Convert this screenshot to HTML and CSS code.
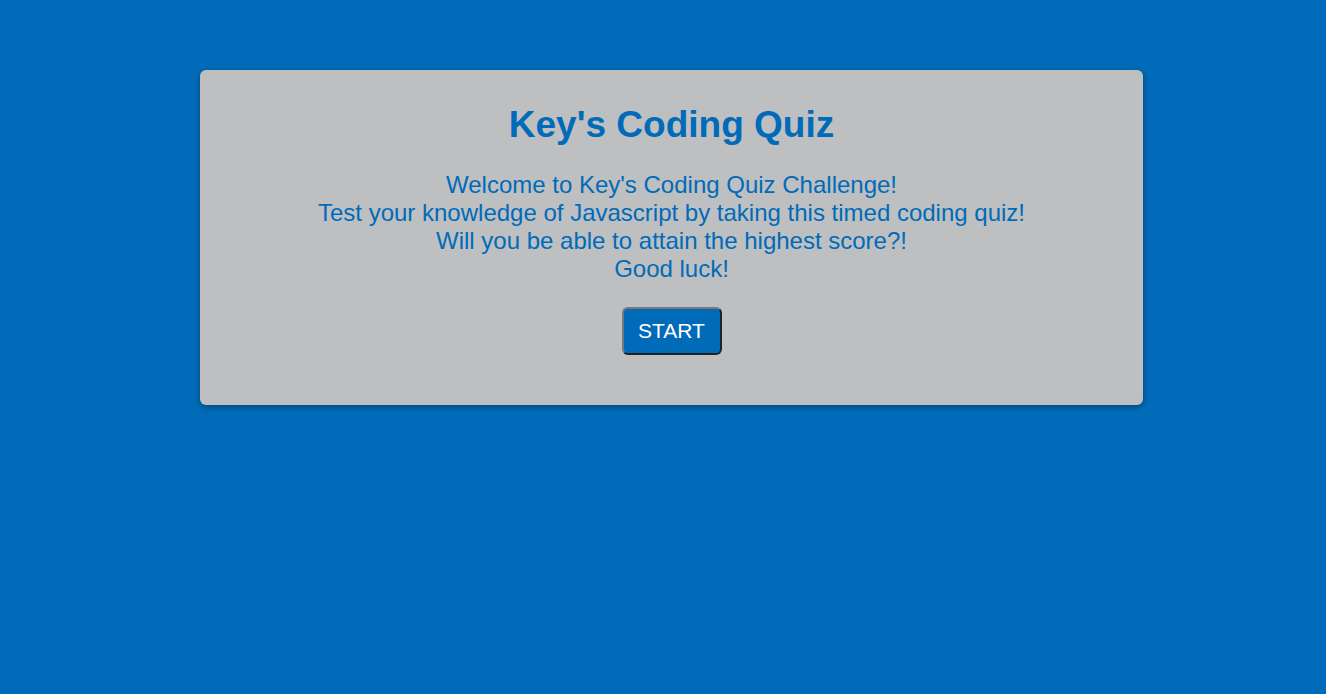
FILE: index.html
```html
<!DOCTYPE html>
<html>
<head>
<meta charset="utf-8">
<link rel="stylesheet" href="styles.css">
</head>
<body>
<main class="card">
  <h1 class="title">Key's Coding Quiz</h1>
  <p class="intro">Welcome to Key's Coding Quiz Challenge!<br>Test your knowledge of Javascript by taking this timed coding quiz!<br>Will you be able to attain the highest score?!<br>Good luck!</p>
  <button class="start">START</button>
</main>
</body>
</html>
```
FILE: styles.css
```css
html, body {
  margin: 0;
  padding: 0;
}
body {
  background: #006bb8;
  font-family: "Liberation Sans", Arial, sans-serif;
  min-height: 694px;
  padding-top: 70px;
  box-sizing: border-box;
}
.card {
  margin-left: 200px;
  width: 943px;
  height: 335px;
  box-sizing: border-box;
  background: #bebfc1;
  border-radius: 6px;
  box-shadow: 0 2px 6px rgba(0, 0, 0, 0.35);
  display: flex;
  flex-direction: column;
  align-items: center;
  padding-top: 34px;
  color: #006bb8;
}
.title {
  margin: 0;
  font-size: 37px;
  font-weight: bold;
  line-height: 42px;
}
.intro {
  margin: 25px 0 0 0;
  font-size: 24px;
  line-height: 28px;
  text-align: center;
}
.start {
  margin-top: 24px;
  width: 100px;
  height: 48px;
  background: #006bb8;
  color: #fff;
  font-family: "Liberation Sans", Arial, sans-serif;
  font-size: 21px;
  border: 2px solid #222;
  border-top-color: #777;
  border-left-color: #777;
  border-radius: 6px;
  padding: 0;
}
```
